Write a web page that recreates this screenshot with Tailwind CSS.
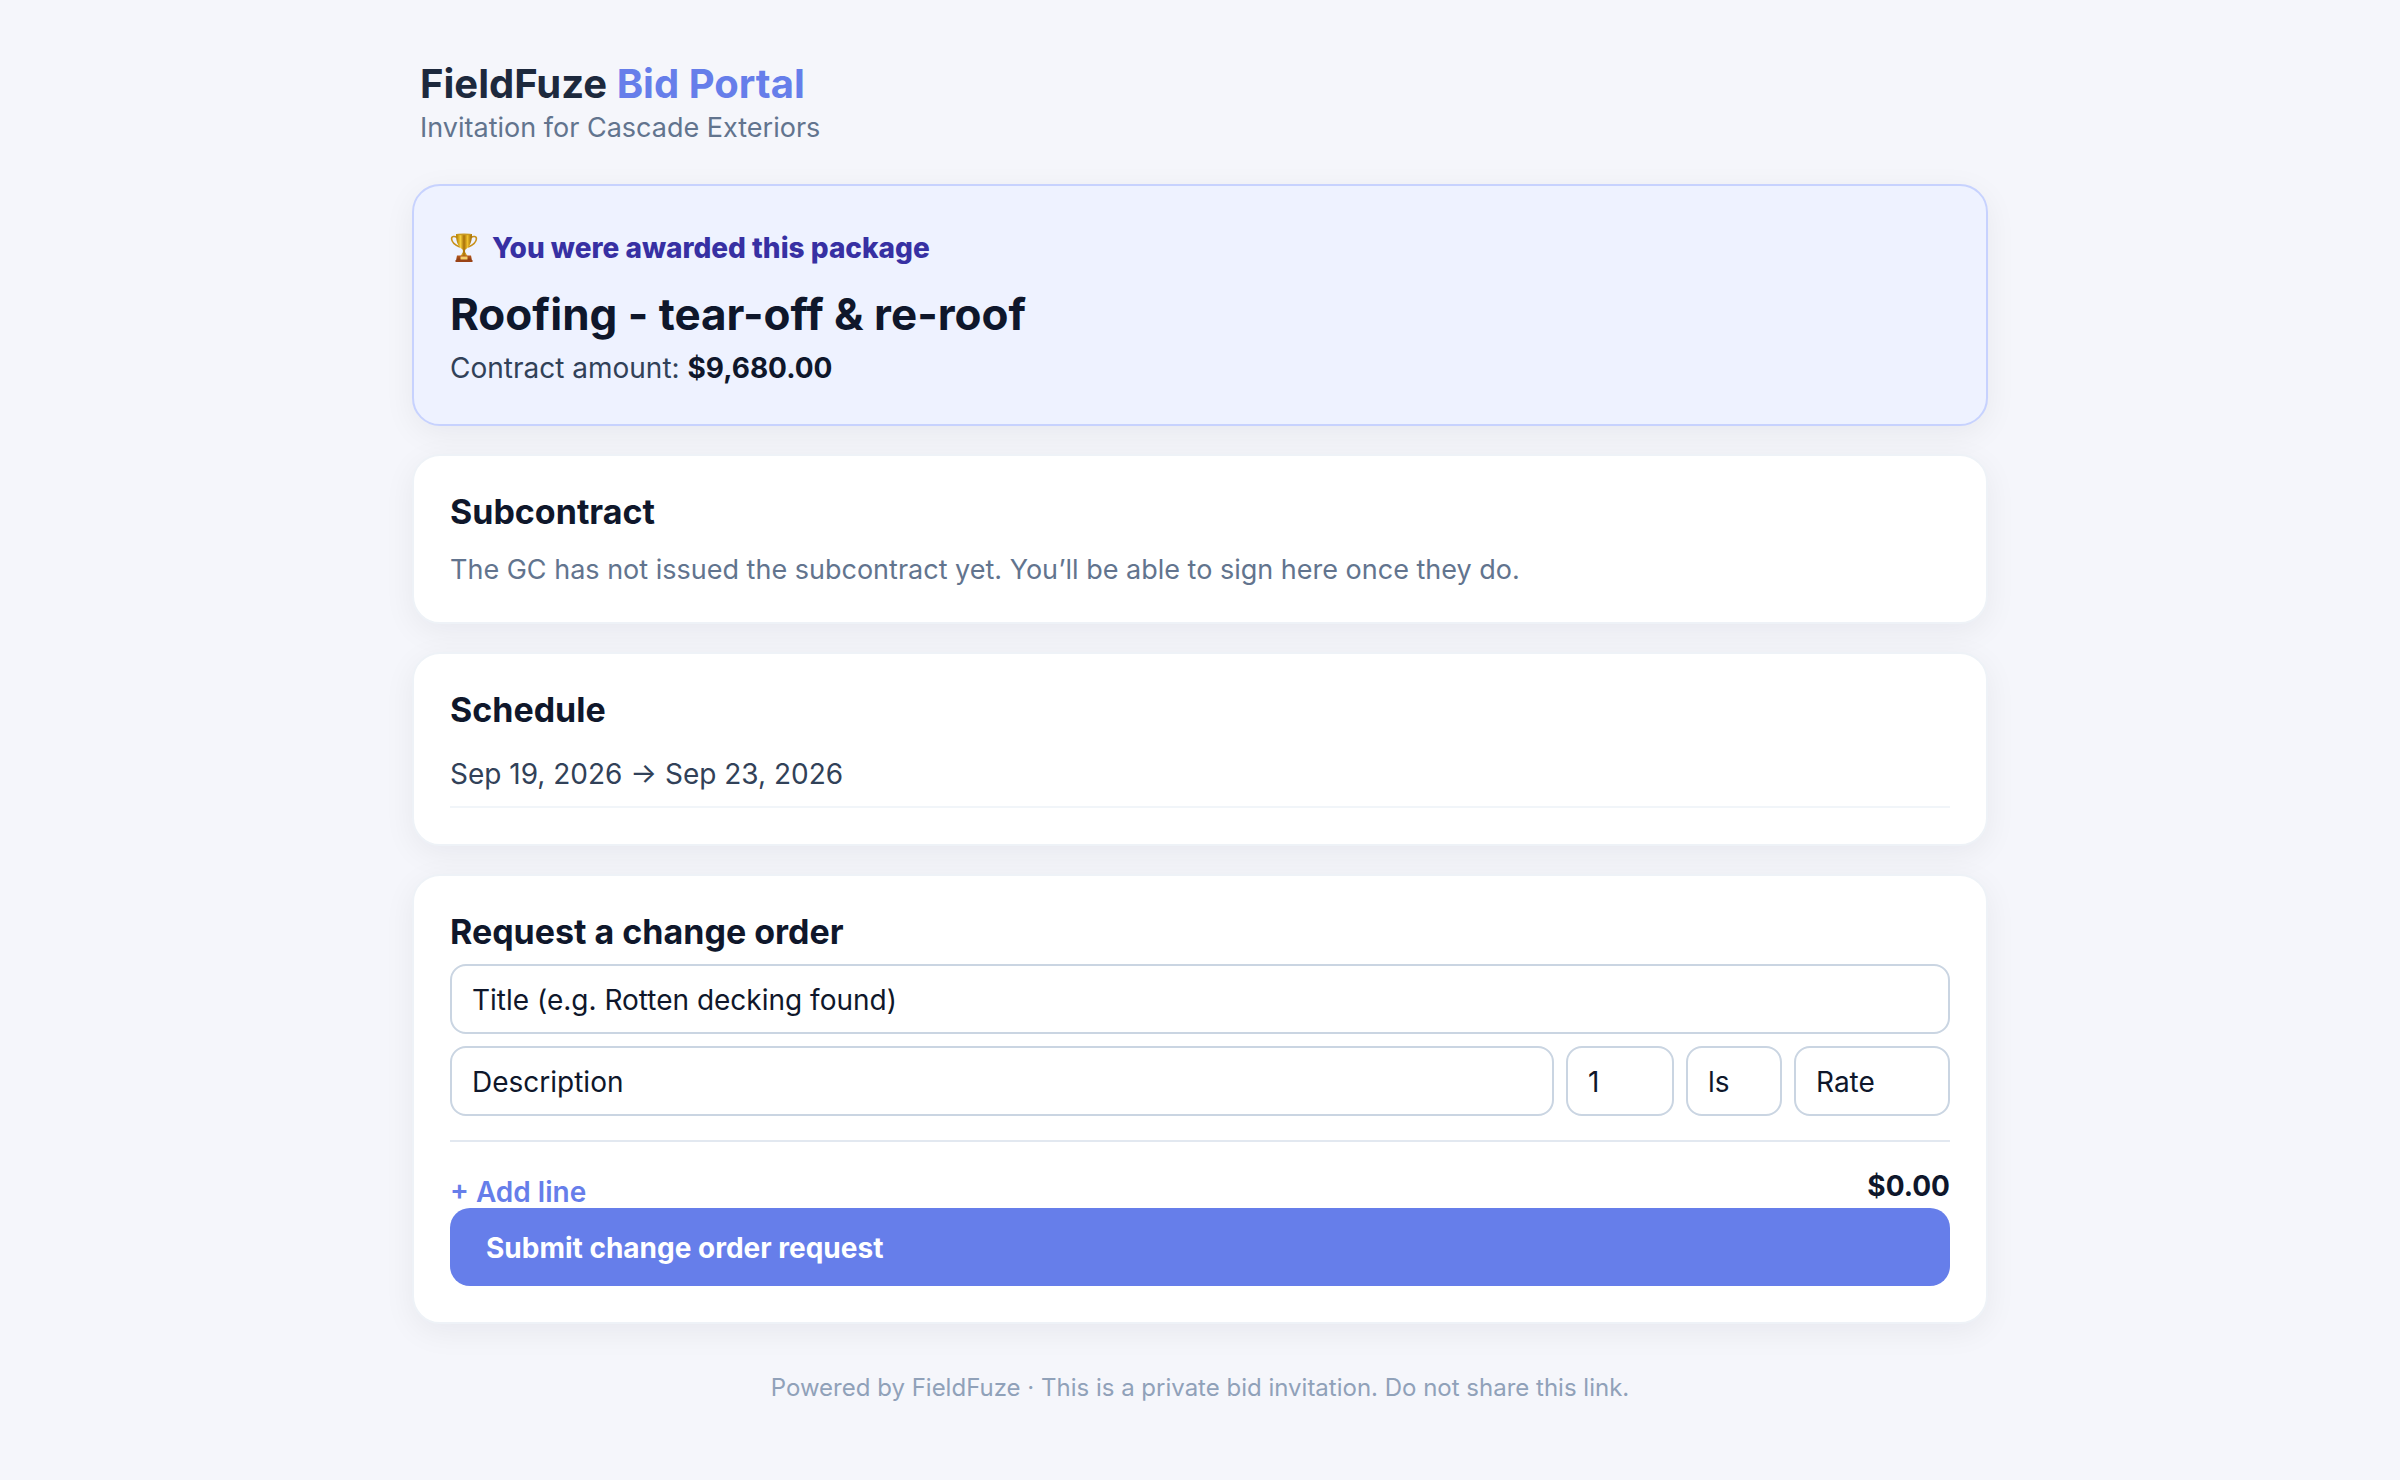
<!DOCTYPE html>
<html lang="en">
  <head>
    <meta charset="UTF-8" />
    <meta name="viewport" content="width=device-width, initial-scale=1.0" />
    <title>FieldFuze Bid Portal</title>
    <script src="https://cdn.jsdelivr.net/npm/@tailwindcss/browser@4"></script>
  </head>
  <body class="min-h-screen bg-[#f5f6fb] font-['Inter',sans-serif] text-[28px] text-slate-900">
    <div class="mx-auto max-w-[1640px] px-8 pt-15 pb-16">
      <header class="mb-9 pl-2">
        <h1 class="text-[40px] leading-12 font-bold text-slate-800">FieldFuze <span class="text-[#667eea]">Bid Portal</span></h1>
        <p class="text-[27px] leading-10 text-slate-500">Invitation for Cascade Exteriors</p>
      </header>

      <main class="flex flex-col gap-7">
        <!-- Award banner -->
        <section class="rounded-[28px] border-2 border-[#c7d2fe] bg-[#eef2ff] p-9 shadow-[0_8px_32px_rgba(15,23,42,0.06)]">
          <div class="flex items-center gap-3.5 pt-1.5 leading-10 font-extrabold text-[#3730a3]">
            <svg class="h-[30px] w-7" viewBox="0 0 28 30" fill="none" aria-hidden="true">
              <defs>
                <linearGradient id="gold" x1="7" y1="0" x2="21" y2="0" gradientUnits="userSpaceOnUse">
                  <stop offset="0" stop-color="#b8860b" />
                  <stop offset="0.25" stop-color="#f5cf3d" />
                  <stop offset="0.5" stop-color="#a86f08" />
                  <stop offset="0.75" stop-color="#efc02c" />
                  <stop offset="1" stop-color="#a9740a" />
                </linearGradient>
                <linearGradient id="wood" x1="0" y1="23" x2="0" y2="29" gradientUnits="userSpaceOnUse">
                  <stop offset="0" stop-color="#b5581c" />
                  <stop offset="1" stop-color="#7a2d0c" />
                </linearGradient>
              </defs>
              <path d="M7 4.500C4.500 2.800 1.400 3.200 1.600 6c.3 3.600 3.500 6 7.700 7.800" stroke="#c8901a" stroke-width="1.600" stroke-linecap="round" />
              <path d="M21 4.500c2.500-1.700 5.600-1.300 5.400 1.500-.3 3.600-3.500 6-7.700 7.800" stroke="#c8901a" stroke-width="1.600" stroke-linecap="round" />
              <path d="M6 1h16c0 7-1.500 12-6.200 15.300-.8.700-.9 1.500-.6 3L17.500 23h-7l2.300-3.700c.3-1.500.2-2.300-.6-3C7.500 13 6 8 6 1z" fill="url(#gold)" />
              <ellipse cx="14" cy="1.300" rx="8" ry="0.900" fill="#c99a22" />
              <path d="M7 22.500h14l1 5H6z" fill="url(#wood)" />
              <path d="M5.500 27h17v2h-17z" fill="#9a4317" />
              <path d="M10.500 23.500h7v3h-7z" fill="#f3cf6a" />
            </svg>
            <span>You were awarded this package</span>
          </div>
          <h2 class="mt-5 text-[44px] leading-13 font-bold">Roofing - tear-off &amp; re-roof</h2>
          <p class="mt-2 leading-10 text-slate-700">Contract amount: <strong class="font-bold text-slate-900">$9,680.00</strong></p>
        </section>

        <section class="rounded-[28px] border-2 border-[#eef2f7] bg-white p-9 shadow-[0_8px_32px_rgba(15,23,42,0.06)]">
          <h3 class="text-[34px] leading-10 font-bold">Subcontract</h3>
          <p class="mt-[22px] text-[27px] leading-8 text-slate-500">The GC has not issued the subcontract yet. You’ll be able to sign here once they do.</p>
        </section>

        <section class="rounded-[28px] border-2 border-[#eef2f7] bg-white p-9 shadow-[0_8px_32px_rgba(15,23,42,0.06)]">
          <h3 class="text-[34px] leading-10 font-bold">Schedule</h3>
          <div class="mt-6 border-b-2 border-slate-100 pb-3 leading-10 text-slate-700">Sep 19, 2026 → Sep 23, 2026</div>
        </section>

        <!-- Change order form -->
        <section class="rounded-[28px] border-2 border-[#eef2f7] bg-white p-9 shadow-[0_8px_32px_rgba(15,23,42,0.06)]">
          <h3 class="text-[34px] leading-10 font-bold">Request a change order</h3>
          <form class="mt-3">
            <input type="text" name="title" aria-label="Title" placeholder="Title (e.g. Rotten decking found)" class="h-[70px] w-full rounded-2xl border-2 border-slate-300 bg-white px-5 pt-0.5 placeholder:text-slate-900" />
            <div class="mt-3 flex gap-3">
              <input type="text" name="description" aria-label="Description" placeholder="Description" class="h-[70px] min-w-0 flex-1 rounded-2xl border-2 border-slate-300 bg-white px-5 pt-0.5 placeholder:text-slate-900" />
              <input type="text" name="qty" aria-label="Quantity" value="1" class="h-[70px] w-[108px] rounded-2xl border-2 border-slate-300 bg-white px-5 pt-0.5" />
              <input type="text" name="unit" aria-label="Unit" value="ls" class="h-[70px] w-24 rounded-2xl border-2 border-slate-300 bg-white px-5 pt-0.5" />
              <input type="text" name="rate" aria-label="Rate" placeholder="Rate" class="h-[70px] w-39 rounded-2xl border-2 border-slate-300 bg-white px-5 pt-0.5 placeholder:text-slate-900" />
            </div>
            <div class="mt-6 flex items-start justify-between border-t-2 border-slate-200 pt-6">
              <button type="button" class="mt-2.5 leading-8 font-semibold text-[#667eea]">+ Add line</button>
              <span class="leading-10 font-bold">$0.00</span>
            </div>
            <button type="submit" class="block w-full rounded-[20px] bg-[#667eea] px-9 pt-5 pb-[18px] text-left leading-10 font-bold text-white">Submit change order request</button>
          </form>
        </section>
      </main>

      <footer class="mt-[46px] text-center text-2xl leading-9 text-slate-400">Powered by FieldFuze · This is a private bid invitation. Do not share this link.</footer>
    </div>
  </body>
</html>
